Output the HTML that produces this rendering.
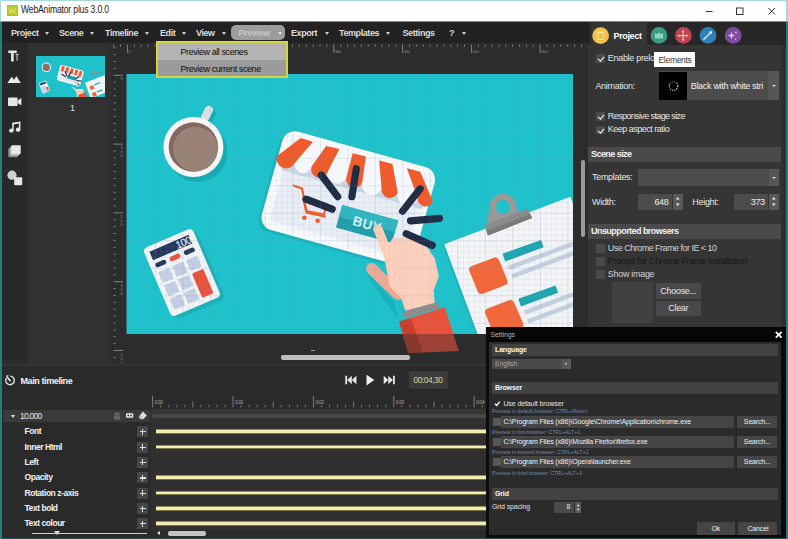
<!DOCTYPE html>
<html lang="en">
<head>
<meta charset="utf-8">
<title>WebAnimator plus 3.0.0</title>
<style>
*{box-sizing:border-box;margin:0;padding:0}
html,body{width:788px;height:539px;overflow:hidden;background:#2b2b2b}
body{position:relative;font-family:"Liberation Sans",sans-serif;font-size:9px;color:#e4e4e4;letter-spacing:-0.3px}
.abs{position:absolute}
#win{position:absolute;left:0;top:0;width:788px;height:539px;overflow:hidden;background:#2c2c2c}
/* title bar */
#title{left:0;top:0;width:788px;height:21.500px;background:#fff;color:#111;border-bottom:1px solid #3aa9a6;border-top:1px solid #a5d9d7;border-right:2px solid #a5d9d7;border-left:1px solid #a5d9d7}
#title .ico{left:5.500px;top:4px;width:11px;height:11px;background:#bccb2b;border:1px solid #b0bf25}
#title .txt{left:20px;top:3px;font-size:10px;color:#1a1a1a;letter-spacing:-0.2px;white-space:nowrap;transform-origin:0 0;transform:scaleX(0.86)}
/* menu */
#menu{left:0;top:21.500px;width:788px;height:21.500px;background:#222}
#menu span{position:absolute;top:6px;font-weight:bold;font-size:9px;color:#dcdcdc;white-space:nowrap;letter-spacing:-0.42px}
#menu i{position:absolute;top:10px;width:0;height:0;border-left:2.5px solid transparent;border-right:2.5px solid transparent;border-top:3px solid #cfcfcf}
#menu .hl{left:231px;top:3px;width:54px;height:15.5px;border-radius:5px;background:#9c9c9c}
/* left toolbar */
#tools{left:0;top:43px;width:28px;height:323px;background:#292929}
#scenes{left:28px;top:43px;width:83px;height:323px;background:#313131}
#edge-l{left:0;top:21.500px;width:1.600px;height:518px;background:#257f7d}
#edge-b{left:0;top:538px;width:788px;height:1px;background:#1d5a59}
#edge-r{left:786px;top:21.500px;width:2px;height:518px;background:#247a78}
/* stage */
#stagewrap{left:111px;top:43px;width:477px;height:323px;background:#2c2c2c}
#stage{left:127px;top:74px;width:446px;height:260px;background:#1fc1cb;box-shadow:-0.5px 0 0 #1fc1cb}
/* dropdown */
#dd{left:156px;top:41px;width:132px;height:37px;background:#9d9d9d;border:2px solid #d3d63c}
#dd div{position:absolute;left:0;width:128px;color:#0c0c0c;font-size:9px;padding:4px 0 0 22.500px;white-space:nowrap;letter-spacing:-0.42px}
/* right panel */
#right{left:588px;top:22px;width:199px;height:344px;background:#353535}
.chk{position:absolute;width:8.500px;height:8.500px;background:#4b4b4b}
.chk.on::after{content:"";position:absolute;left:3px;top:1px;width:2.5px;height:5px;border:solid #fff;border-width:0 1.6px 1.6px 0;transform:rotate(40deg)}
.lbl{position:absolute;white-space:nowrap;font-size:9px;color:#e6e6e6}
.sec{position:absolute;left:0;height:14px;background:#4a4a4a;font-weight:bold;font-size:9px;color:#f2f2f2;padding:2px 0 0 3px;letter-spacing:-0.55px}
.inp{position:absolute;background:#4c4c4c}
.btn{position:absolute;background:#494949;color:#e6e6e6;font-size:9px;text-align:center}
/* timeline */
#tl{left:0;top:366px;width:788px;height:173px;background:#2a2a2a}
.row{position:absolute;left:24.500px;font-size:8.500px;color:#f3f3f3;white-space:nowrap;font-weight:bold;letter-spacing:-0.45px}
.plus{position:absolute;left:137px;width:11px;height:11px;background:#474747}
.plus::before{content:"";position:absolute;left:2.500px;top:5px;width:6px;height:1.4px;background:#ddd}
.plus::after{content:"";position:absolute;left:4.800px;top:2.500px;width:1.4px;height:6px;background:#ddd}
.bar{position:absolute;left:156px;width:340px;height:4.500px;background:#f3edb0;border-top:1px solid #8f8b5a;border-bottom:1px solid #76724a}
/* settings */
#set{left:489px;top:327px;width:299px;height:212px;background:#0a0a0a}
#set .tb{left:0;top:0;width:299px;height:15px;background:#060606;color:#b4b4b4;font-size:7px;padding:4px 0 0 1.500px;letter-spacing:-0.1px}
#set .sec2{position:absolute;left:3px;width:285.500px;height:12px;background:#424242;font-weight:bold;font-size:7px;color:#f6f6f6;padding:2px 0 0 3px;letter-spacing:-0.15px}
#set .s{position:absolute;white-space:nowrap;font-size:7px;color:#e4e4e4;letter-spacing:-0.1px}
#set .h{position:absolute;white-space:nowrap;font-size:5.300px;color:#6d8ca6;letter-spacing:-0.05px}
#set .path{position:absolute;left:19px;width:231px;height:11px;background:#454545;color:#f0f0f0;font-size:7px;padding:2px 0 0 2.200px;white-space:nowrap;overflow:hidden;letter-spacing:-0.15px}
#set .sb{position:absolute;left:253px;width:42px;height:11px;background:#454545;color:#f0f0f0;font-size:7px;text-align:center;padding-top:2px;letter-spacing:-0.15px}
#set .c{position:absolute;left:5px;width:8px;height:8px;background:#575757}
</style>
</head>
<body>
<div id="win">
  <!-- TITLE BAR -->
  <div id="title" class="abs">
    <div class="ico abs"><svg width="11" height="11" viewBox="0 0 11 11" style="position:absolute;left:-1px;top:-1px"><path d="M2.500 3l1.300 5 1.700-4 1.700 4 1.300-5" stroke="#dfe86c" stroke-width="1" fill="none"/></svg></div>
    <div class="txt abs">WebAnimator plus 3.0.0</div>
    <svg class="abs" style="left:689px;top:-1px" width="98" height="21" viewBox="0 0 98 21">
      <path d="M16 11.500h6.500" stroke="#333" stroke-width="1" fill="none"/>
      <rect x="46.500" y="8" width="6.500" height="6.500" stroke="#333" stroke-width="1" fill="none"/>
      <path d="M78.500 8l6.500 6.500M85 8l-6.500 6.500" stroke="#333" stroke-width="1" fill="none"/>
    </svg>
  </div>

  <!-- MENU BAR -->
  <div id="menu" class="abs">
    <div class="hl abs"></div>
    <span style="left:11px">Project</span><i style="left:44.700px"></i>
    <span style="left:59px">Scene</span><i style="left:90.400px"></i>
    <span style="left:105px">Timeline</span><i style="left:144.700px"></i>
    <span style="left:160px">Edit</span><i style="left:181.800px"></i>
    <span style="left:196px">View</span><i style="left:222.400px"></i>
    <span style="left:238.500px;color:#c6c6c6">Preview</span><i style="left:277.500px;border-top-color:#e2e2e2"></i>
    <span style="left:291px">Export</span><i style="left:324.900px"></i>
    <span style="left:339px">Templates</span><i style="left:385.800px"></i>
    <span style="left:402.500px">Settings</span>
    <span style="left:449px">?</span><i style="left:461.500px"></i>
  </div>
  <!-- LEFT TOOLS -->
  <div id="tools" class="abs">
    <svg class="abs" style="left:0;top:0" width="28" height="323" viewBox="0 43 28 323" fill="#e8e8e8">
      <!-- text tool -->
      <path d="M8.300 50.400h8.400v2.600h-3v8.400h-2.600v-8.400h-2.800z"/>
      <path d="M15.500 53.800h3.200v1.200h-1v5.800h-1.200v-5.800h-1z" fill="#bdbdbd"/>
      <!-- image -->
      <path d="M7.400 83l4.300-6.200 2.400 3 2.200-3.800 4.500 7z"/>
      <!-- camera -->
      <rect x="8" y="97.500" width="9.600" height="8.500" rx="1"/>
      <path d="M17.600 100.600l3.800-2.600v7.600l-3.800-2.600z"/>
      <!-- music -->
      <path d="M12.200 122.800l8.200-1.400v8.300a2.300 2 0 1 1-1.500-1.900v-4.300l-5.200.9v6.200a2.300 2 0 1 1-1.500-1.900z"/>
      <!-- layers -->
      <rect x="8.300" y="148.200" width="9.400" height="9" rx="1" fill="#8e8e8e"/>
      <rect x="9.800" y="146.700" width="9.400" height="9" rx="1" fill="#b5b5b5"/>
      <rect x="11.300" y="145.300" width="9.400" height="9" rx="1"/>
      <!-- shapes -->
      <circle cx="12" cy="175.200" r="4.600" fill="#cfcfcf"/>
      <rect x="14.200" y="177.200" width="8" height="8" rx="1"/>
    </svg>
  </div>
  <div id="scenes" class="abs">
    <div class="abs" style="left:8px;top:13px;width:69px;height:41px;background:#1fc1cb;overflow:hidden">
      <svg width="69" height="41" viewBox="0 0 446 260" preserveAspectRatio="none">
        <circle cx="67" cy="72" r="30" fill="#f6f7f7"/><circle cx="67" cy="72" r="24" fill="#8a7065"/>
        <g transform="translate(17 174) rotate(-22.400)"><rect width="51" height="70" rx="4" fill="#f3f4f5"/><rect x="5" y="5" width="41" height="12" fill="#24375a"/><rect x="5" y="26" width="26" height="38" fill="#c3cfe2"/><rect x="34" y="40" width="12" height="25" fill="#e8503c"/></g>
        <g transform="translate(158.800 53.300) rotate(15.500)"><rect width="158" height="102" rx="13" fill="#f7f9fb"/><rect x="9" y="9" width="140" height="84" fill="#e3e9f2"/>
          <rect x="12" y="6" width="18" height="34" fill="#ef5b2b"/><rect x="42" y="6" width="18" height="34" fill="#ef5b2b"/><rect x="72" y="6" width="18" height="34" fill="#ef5b2b"/><rect x="102" y="6" width="18" height="34" fill="#ef5b2b"/><rect x="130" y="6" width="18" height="34" fill="#ef5b2b"/>
          <rect x="62" y="52" width="58" height="22" fill="#1c9faa"/>
          <path d="M40 35l18 22M75 28l-4 28M25 58l26 8M135 42l-16 22M128 70l28-3M124 82l26 12" stroke="#1f2d45" stroke-width="7" stroke-linecap="round"/></g>
        <polygon points="317,169 443,122 480,220 353,270" fill="#f3f4f5"/>
        <polygon points="345,193 369,184 378,207 354,216" fill="#f2673a"/><polygon points="361,236 384,227 394,250 370,260" fill="#f2673a"/>
        <polygon points="376,179 414,165 417,172 378,187" fill="#1fa7b0"/><polygon points="391,224 429,211 431,218 394,231" fill="#1fa7b0"/>
        <path d="M360 112l44-17 5 12-45 17z" fill="#8f8f8f"/><circle cx="377" cy="95" r="8" fill="none" stroke="#9b9b9b" stroke-width="4"/>
        <path d="M256 160l14 28M262 215l40 0 6 50-36 0zM240 200l30 28" stroke="#fbcdb9" stroke-width="10" stroke-linecap="round" fill="#fbcdb9"/>
        <polygon points="272,247 318,232 332,275 281,277" fill="#e8523a"/>
      </svg>
    </div>
    <div class="abs" style="left:42px;top:60px;font-size:9px;color:#ddd">1</div>
  </div>
  <!-- STAGE AREA -->
  <div id="stagewrap" class="abs"></div>
  <svg class="abs" style="left:0;top:0" width="788" height="370" viewBox="0 0 788 370">
    <path d="M113.6 44.5v2.200M120.5 44.5v2.200M127.4 44.5v8.5M134.3 44.5v2.200M141.2 44.5v2.200M148.0 44.5v2.200M154.9 44.5v2.200M161.8 44.5v2.200M168.7 44.5v2.200M175.6 44.5v2.200M182.4 44.5v2.200M189.3 44.5v2.200M196.2 44.5v8.5M203.1 44.5v2.200M210.0 44.5v2.200M216.8 44.5v2.200M223.7 44.5v2.200M230.6 44.5v2.200M237.5 44.5v2.200M244.4 44.5v2.200M251.2 44.5v2.200M258.1 44.5v2.200M265.0 44.5v8.5M271.9 44.5v2.200M278.8 44.5v2.200M285.6 44.5v2.200M292.5 44.5v2.200M299.4 44.5v2.200M306.3 44.5v2.200M313.2 44.5v2.200M320.0 44.5v2.200M326.9 44.5v2.200M333.8 44.5v8.5M340.7 44.5v2.200M347.6 44.5v2.200M354.4 44.5v2.200M361.3 44.5v2.200M368.2 44.5v2.200M375.1 44.5v2.200M382.0 44.5v2.200M388.8 44.5v2.200M395.7 44.5v2.200M402.6 44.5v8.5M409.5 44.5v2.200M416.4 44.5v2.200M423.2 44.5v2.200M430.1 44.5v2.200M437.0 44.5v2.200M443.9 44.5v2.200M450.8 44.5v2.200M457.6 44.5v2.200M464.5 44.5v2.200M471.4 44.5v8.5M478.3 44.5v2.200M485.2 44.5v2.200M492.0 44.5v2.200M498.9 44.5v2.200M505.8 44.5v2.200M512.7 44.5v2.200M519.6 44.5v2.200M526.4 44.5v2.200M533.3 44.5v2.200M540.2 44.5v8.5M547.1 44.5v2.200M554.0 44.5v2.200M560.8 44.5v2.200M567.7 44.5v2.200M574.6 44.5v2.200M581.5 44.5v2.200" stroke="#8c8c8c" stroke-width="0.9" fill="none"/>
    <text x="128.6" y="52.500" font-size="4" fill="#8c8c8c" font-family="Liberation Sans,sans-serif">0</text><text x="335.0" y="52.500" font-size="4" fill="#8c8c8c" font-family="Liberation Sans,sans-serif">300</text><text x="403.8" y="52.500" font-size="4" fill="#8c8c8c" font-family="Liberation Sans,sans-serif">400</text><text x="472.6" y="52.500" font-size="4" fill="#8c8c8c" font-family="Liberation Sans,sans-serif">500</text><text x="541.4" y="52.500" font-size="4" fill="#8c8c8c" font-family="Liberation Sans,sans-serif">600</text>
    <path d="M113.500 47.8h2.200M113.500 54.7h2.200M113.500 61.5h2.200M113.500 68.4h2.200M113.500 75.3h9.500M113.500 82.2h2.200M113.500 89.1h2.200M113.500 95.9h2.200M113.500 102.8h2.200M113.500 109.7h2.200M113.500 116.6h2.200M113.500 123.5h2.200M113.500 130.3h2.200M113.500 137.2h2.200M113.500 144.1h9.500M113.500 151.0h2.200M113.500 157.9h2.200M113.500 164.7h2.200M113.500 171.6h2.200M113.500 178.5h2.200M113.500 185.4h2.200M113.500 192.3h2.200M113.500 199.1h2.200M113.500 206.0h2.200M113.500 212.9h9.500M113.500 219.8h2.200M113.500 226.7h2.200M113.500 233.5h2.200M113.500 240.4h2.200M113.500 247.3h2.200M113.500 254.2h2.200M113.500 261.1h2.200M113.500 267.9h2.200M113.500 274.8h2.200M113.500 281.7h9.500M113.500 288.6h2.200M113.500 295.5h2.200M113.500 302.3h2.200M113.500 309.2h2.200M113.500 316.1h2.200M113.500 323.0h2.200M113.500 329.9h2.200M113.500 336.7h2.200M113.500 343.6h2.200M113.500 350.5h9.500M113.500 357.4h2.200M113.500 364.3h2.200" stroke="#8c8c8c" stroke-width="0.9" fill="none"/>
    <text x="120.500" y="80.3" font-size="4" fill="#8c8c8c" font-family="Liberation Sans,sans-serif">0</text><text x="120.500" y="149.1" font-size="4" fill="#8c8c8c" font-family="Liberation Sans,sans-serif">1</text><text x="120.500" y="153.1" font-size="4" fill="#8c8c8c" font-family="Liberation Sans,sans-serif">0</text><text x="120.500" y="157.1" font-size="4" fill="#8c8c8c" font-family="Liberation Sans,sans-serif">0</text><text x="120.500" y="217.9" font-size="4" fill="#8c8c8c" font-family="Liberation Sans,sans-serif">2</text><text x="120.500" y="221.9" font-size="4" fill="#8c8c8c" font-family="Liberation Sans,sans-serif">0</text><text x="120.500" y="225.9" font-size="4" fill="#8c8c8c" font-family="Liberation Sans,sans-serif">0</text><text x="120.500" y="286.7" font-size="4" fill="#8c8c8c" font-family="Liberation Sans,sans-serif">3</text><text x="120.500" y="290.7" font-size="4" fill="#8c8c8c" font-family="Liberation Sans,sans-serif">0</text><text x="120.500" y="294.7" font-size="4" fill="#8c8c8c" font-family="Liberation Sans,sans-serif">0</text><text x="120.500" y="355.5" font-size="4" fill="#8c8c8c" font-family="Liberation Sans,sans-serif">4</text><text x="120.500" y="359.5" font-size="4" fill="#8c8c8c" font-family="Liberation Sans,sans-serif">0</text><text x="120.500" y="363.5" font-size="4" fill="#8c8c8c" font-family="Liberation Sans,sans-serif">0</text>
  </svg>
  <div id="stage" class="abs">
    <svg class="abs" style="left:0;top:1px;overflow:visible" width="446" height="260" viewBox="0 0 446 260">
      <defs>
        <pattern id="finegrid" width="5.500" height="5.500" patternUnits="userSpaceOnUse" x="0.400" y="0.300">
          <path d="M0 0.250H5.500M0.250 0V5.500" stroke="#8aa0c0" stroke-opacity="0.28" stroke-width="0.5" fill="none"/>
        </pattern>
        <pattern id="handgrid" width="5.500" height="5.500" patternUnits="userSpaceOnUse" x="0.400" y="0.300">
          <path d="M0 0.250H5.500M0.250 0V5.500" stroke="#ffffff" stroke-opacity="0.35" stroke-width="0.5" fill="none"/>
        </pattern>
        <pattern id="majgrid" width="27.500" height="27.500" patternUnits="userSpaceOnUse" x="0.400" y="0.300">
          <path d="M0 0.400H27.500M0.400 0V27.500" stroke="#6f93a8" stroke-opacity="0.22" stroke-width="0.8" fill="none"/>
        </pattern>
        <clipPath id="stclip"><rect x="-0.5" y="-1" width="446.500" height="260"/></clipPath>
      </defs>
      <g opacity="0.6">
        <polygon points="272.200,247.500 317.600,233.200 331.900,276.000 281.200,278.100" fill="#e8523a"/>
        <polygon points="272.200,247.500 283.600,244.100 296.000,276.600 281.200,278.100" fill="#c63f2f"/>
      </g>
      <g clip-path="url(#stclip)">
<g>
<circle cx="70.4" cy="77.0" r="30" fill="#18aab4"/>
<line x1="81.0" y1="46.6" x2="84.9" y2="38.9" stroke="#18aab4" stroke-width="7.5" stroke-linecap="round"/>
<line x1="78.0" y1="42.6" x2="81.9" y2="34.9" stroke="#dcdfe1" stroke-width="8.3" stroke-linecap="round"/>
<circle cx="66.4" cy="72.0" r="30" fill="#f6f7f7"/>
<circle cx="66.4" cy="72.0" r="24.7" fill="#84685d"/>
<circle cx="68.4" cy="74.0" r="22.3" fill="#9b8276"/>
</g>
<g transform="translate(15.6 173.9) rotate(-23.2) scale(1.04)">
<rect x="3" y="4" width="51.500" height="71.500" rx="4" fill="#1bb0ba"/>
<rect x="0" y="0" width="51.500" height="71.500" rx="4" fill="#f3f4f5"/>
<rect x="5" y="5" width="41" height="9" fill="#24375a"/>
<text x="46" y="13.2" font-family="Liberation Sans,sans-serif" font-size="10" fill="#ffffff" text-anchor="end" letter-spacing="-0.5">100</text>
<rect x="5" y="17.5" width="11" height="4.6" rx="2.3" fill="#24375a"/>
<rect x="20" y="17.5" width="11" height="4.6" rx="2.3" fill="#e8503c"/>
<rect x="35" y="17.5" width="11" height="4.6" rx="2.3" fill="#24375a"/>
<rect x="5.0" y="26.5" width="11.4" height="11.4" fill="#c3cfe2"/>
<rect x="19.6" y="26.5" width="11.4" height="11.4" fill="#c3cfe2"/>
<rect x="34.2" y="26.5" width="11.4" height="11.4" fill="#c3cfe2"/>
<rect x="5.0" y="40.5" width="11.4" height="11.4" fill="#c3cfe2"/>
<rect x="19.6" y="40.5" width="11.4" height="11.4" fill="#c3cfe2"/>
<rect x="5.0" y="54.5" width="11.4" height="11.4" fill="#c3cfe2"/>
<rect x="19.6" y="54.5" width="11.4" height="11.4" fill="#c3cfe2"/>
<rect x="34.2" y="40.5" width="11.8" height="25.500" rx="1.5" fill="#e8503c"/>
</g>
<polygon points="16.9,174.4 64.2,154.2 92.7,220.6 45.4,240.9" fill="url(#finegrid)"/>
<g transform="translate(158.8 53.3) rotate(15.5)">
<rect x="-2.5" y="3" width="158" height="102" rx="13" fill="#1bb2bc"/>
<rect x="0" y="0" width="158" height="102" rx="13" fill="#f7f9fb"/>
<rect x="9" y="9" width="140" height="84" rx="3" fill="#e9eef5"/>
<rect x="7" y="28" width="146" height="13.5" fill="#cbd6e5"/>
<rect x="74.9" y="58.7" width="58" height="23.6" fill="#1c9faa"/>
<rect x="74.9" y="58.7" width="58" height="12" fill="#30b5c0"/>
<text x="104" y="75.4" text-anchor="middle" font-family="Liberation Sans,sans-serif" font-weight="bold" font-size="13.5" fill="#d9f5f7" letter-spacing="0.2">BUY</text>
</g>
<polygon points="160.9,57.0 307.4,97.6 281.7,190.1 135.2,149.5" fill="url(#finegrid)"/>
<path d="M185.9 66.7 L199.1 71.0 L184.7 91.3 A8.6 8.6 0 0 1 167.8 87.9 Z" fill="#f4f7fb"/>
<path d="M212.4 73.9 L225.7 78.3 L219.6 101.7 A9.9 9.9 0 0 1 200.3 97.6 Z" fill="#f4f7fb"/>
<path d="M238.9 81.6 L252.2 85.5 L254.6 113.7 A10.2 10.2 0 0 1 235.3 107.2 Z" fill="#f4f7fb"/>
<path d="M265.4 88.9 L279.9 93.2 L290.8 123.4 A10.5 10.5 0 0 1 270.7 117.3 Z" fill="#f4f7fb"/>
<path d="M173.8 63.1 L185.9 66.7 L167.8 87.9 A9.7 9.7 0 0 1 149.7 81.2 Z" fill="#ef5b2b"/>
<path d="M199.1 71.0 L212.4 73.9 L200.3 97.6 A8.4 8.4 0 0 1 184.7 91.3 Z" fill="#ef5b2b"/>
<path d="M225.7 78.3 L238.9 81.6 L235.3 107.2 A8.3 8.3 0 0 1 219.6 101.7 Z" fill="#ef5b2b"/>
<path d="M252.2 85.5 L265.4 88.9 L270.7 117.3 A8.3 8.3 0 0 1 254.6 113.7 Z" fill="#ef5b2b"/>
<path d="M279.9 93.2 L293.2 96.8 L305.9 126.5 A7.8 7.8 0 0 1 290.8 123.4 Z" fill="#ef5b2b"/>
<g fill="none" stroke="#ef5b2b" stroke-width="2.1" stroke-linejoin="round" stroke-linecap="round">
<polyline points="166.6,110.6 175.0,113.5 179.8,137.8 197.9,141.4"/>
<polygon points="176.2,123.4 200.3,129.4 196.7,139.5 179.1,136.1"/>
<polyline points="182.3,128.2 195.5,131.3"/>
</g>
<circle cx="177.4" cy="142.7" r="2.3" fill="#ef5b2b"/><circle cx="190.7" cy="145.8" r="2.3" fill="#ef5b2b"/>
<polygon points="315.6,170.1 443.4,122.8 493.9,259.1 366.1,306.4" fill="#1cb3bd" />
<polygon points="317.2,169.2 443.4,121.8 493.9,257.5 367.7,304.9" fill="#f3f4f5" />
<polygon points="317.2,169.2 443.4,121.8 493.9,257.5 367.7,304.9" fill="url(#finegrid)" />
<circle cx="375.9" cy="132.0" r="10.2" fill="none" stroke="#999999" stroke-width="6.2"/>
<polygon points="362.5,132.5 359.4,151.7 392.2,139.2 389.1,131.7 383.1,136.7 376.4,139.4 369.7,137.6" fill="#999999" />
<polygon points="357.2,150.1 400.6,133.4 405.1,143.1 361.0,160.4" fill="#8b8b8b" />
<polygon points="359.4,155.9 403.4,139.2 405.1,143.1 361.0,160.4" fill="#7a7a7a" />
<polygon points="346.2,194.7 368.3,186.5 376.5,206.4 354.4,214.9" fill="#f2673a" stroke="#f2673a" stroke-width="8" stroke-linejoin="round"/>
<polygon points="362.0,237.3 383.5,229.1 392.3,249.6 370.9,258.5" fill="#f2673a" stroke="#f2673a" stroke-width="8" stroke-linejoin="round"/>
<polygon points="375.6,178.6 414.1,165.1 416.6,172.3 378.1,186.5" fill="#1fa7b0" />
<polygon points="391.4,223.8 428.6,210.5 431.1,217.8 393.9,231.6" fill="#1fa7b0" />
<line x1="381.9" y1="192.8" x2="451.3" y2="167.0" stroke="#c3cede" stroke-width="4.5"/>
<line x1="385.1" y1="201.4" x2="451.3" y2="176.4" stroke="#c3cede" stroke-width="4.5"/>
<line x1="397.7" y1="237.6" x2="451.3" y2="217.4" stroke="#c3cede" stroke-width="4.5"/>
<line x1="400.8" y1="246.5" x2="451.3" y2="227.5" stroke="#c3cede" stroke-width="4.5"/>
<path d="M238.4 195.8 L267.0 227.0 L270.9 243.9 L246.2 210.1 Z" fill="#1bb0ba"/>
<line x1="244.9" y1="193.8" x2="270.9" y2="219.2" stroke="#e9ab98" stroke-width="11.5" stroke-linecap="round" />
<path d="M258.6 179.0 L267.0 164.7 L292.9 164.7 L305.9 184.2 L309.8 201.0 L304.6 215.3 L305.9 229.6 L279.9 234.0 L276.1 222.6 L264.4 210.1 Z" fill="#fbcdb9" stroke="#fbcdb9" stroke-width="4" stroke-linejoin="round"/>
<line x1="250.9" y1="154.0" x2="263.1" y2="184.2" stroke="#fbcdb9" stroke-width="9.2" stroke-linecap="round" />
<path d="M258.6 179.0 L267.0 164.7 L292.9 164.7 L305.9 184.2 L309.8 201.0 L304.6 215.3 L305.9 229.6 L279.9 234.0 L276.1 222.6 L264.4 210.1 Z" fill="url(#handgrid)"/>
<polygon points="275.5,236.6 310.6,227.0 312.7,233.0 277.4,243.4" fill="#8d8d8d" />
<polygon points="272.2,246.5 317.6,232.2 331.9,275.1 281.2,277.1" fill="#e8523a" />
<polygon points="272.2,246.5 283.6,243.1 296.1,275.6 281.2,277.1" fill="#c63f2f" />
<line x1="194.3" y1="100.0" x2="210.7" y2="121.7" stroke="#1f2d45" stroke-width="7.2" stroke-linecap="round" />
<line x1="229.3" y1="93.7" x2="224.9" y2="121.7" stroke="#1f2d45" stroke-width="7.2" stroke-linecap="round" />
<line x1="179.1" y1="124.1" x2="205.2" y2="134.2" stroke="#1f2d45" stroke-width="7.2" stroke-linecap="round" />
<line x1="293.2" y1="113.7" x2="275.6" y2="136.1" stroke="#1f2d45" stroke-width="7.2" stroke-linecap="round" />
<line x1="283.5" y1="145.8" x2="312.5" y2="143.4" stroke="#1f2d45" stroke-width="7.2" stroke-linecap="round" />
<line x1="279.2" y1="158.8" x2="305.2" y2="170.4" stroke="#1f2d45" stroke-width="7.2" stroke-linecap="round" />
        <rect x="-0.5" y="-1" width="446.500" height="260" fill="url(#majgrid)"/>
      </g>
    </svg>
  </div>
  <div class="abs" style="left:1px;top:362.500px;width:587px;height:4px;background:#323232"></div>
  <!-- stage scrollbars -->
  <div class="abs" style="left:281px;top:355px;width:128.500px;height:4.500px;border-radius:2px;background:#bdbdbd"></div>
  <div class="abs" style="left:311px;top:350px;width:4px;height:1px;background:#999"></div>
  <div class="abs" style="left:580.500px;top:160px;width:4px;height:77px;border-radius:2px;background:#9a9a9a"></div>

  <!-- DROPDOWN -->
  <div id="dd" class="abs">
    <div style="top:0;height:16.500px;background:#b4b4b4">Preview all scenes</div>
    <div style="top:16.500px;height:16.500px;background:#9b9b9b">Preview current scene</div>
  </div>
  <!-- RIGHT PANEL -->
  <div id="right" class="abs">
    <!-- tab bar -->
    <div class="abs" style="left:0;top:0;width:199px;height:23px;background:#272727"></div>
    <div class="abs" style="left:2.500px;top:0;width:56px;height:23px;background:#353535"></div>
    <svg class="abs" style="left:0;top:0" width="199" height="24" viewBox="588 22 199 24">
      <circle cx="600.600" cy="35.600" r="8.400" fill="#f0c24b"/>
      <path d="M597.500 32.500h6.200l-.6 7h-5zM597 32h7.200" stroke="#fbe9b0" stroke-width="1" fill="none"/>
      <circle cx="659" cy="35.400" r="8.400" fill="#3b9a82"/>
      <path transform="translate(-1 0)" d="M656 32.800l2 1.400 2-1.800 2 1.800 2-1.400v5.800h-8z" fill="#8fd6bd"/>
      <circle cx="683.400" cy="35.400" r="8.400" fill="#bd4450"/>
      <path d="M683 31v9.200M678.400 35.600h9.200" stroke="#f3b3b8" stroke-width="1.300" stroke-linecap="round"/>
      <path d="M683 30.300l1.600 1.800h-3.200zM683 40.900l1.600-1.800h-3.200zM677.700 35.600l1.800-1.600v3.200zM688.300 35.600l-1.800-1.600v3.200z" fill="#f3b3b8"/>
      <circle cx="708" cy="35.400" r="8.400" fill="#2f80b8"/>
      <path d="M703.800 39.400l6.200-6.200" stroke="#bfe0f5" stroke-width="1.600" stroke-linecap="round"/>
      <circle cx="710.800" cy="32.400" r="1.300" fill="#e8f5fd"/>
      <circle cx="733.200" cy="35.400" r="8.400" fill="#7b4b9d"/>
      <path d="M731.500 32l1 2.600 2.600 1-2.600 1-1 2.600-1-2.600-2.600-1 2.600-1z" fill="#d9c3ea"/>
      <circle cx="736" cy="32.500" r="0.900" fill="#d9c3ea"/><circle cx="735.500" cy="39" r="0.800" fill="#d9c3ea"/>
    </svg>
    <div class="lbl" style="left:25.500px;top:8.500px;font-weight:bold;color:#fff;font-size:9px;letter-spacing:-0.35px">Project</div>

    <!-- preloader -->
    <div class="chk on" style="left:8px;top:32px"></div>
    <div class="lbl" style="left:19.800px;top:30.500px">Enable preloader</div>
    <div class="abs" style="left:65.800px;top:29.700px;width:41.500px;height:15px;background:#fdfdfd"></div>
    <div class="lbl" style="left:70.500px;top:32.500px;color:#3a3a3a;font-size:8.500px">Elements</div>

    <div class="lbl" style="left:7.400px;top:59px">Animation:</div>
    <div class="inp" style="left:71px;top:48.500px;width:119.500px;height:29.500px"></div>
    <div class="abs" style="left:71px;top:49.500px;width:28px;height:28px;background:#000"></div>
    <svg class="abs" style="left:71px;top:49.500px" width="28" height="28" viewBox="0 0 28 28">
      <circle cx="14.500" cy="14" r="4.300" fill="none" stroke="#d8d8d8" stroke-width="1.300" stroke-dasharray="1.300 1" opacity="0.85"/>
      <path d="M11 11.500a4.300 4.300 0 0 1 6-1" stroke="#000" stroke-width="1.600" fill="none" opacity="0.6"/>
    </svg>
    <div class="lbl" style="left:102.700px;top:59px;color:#f0f0f0">Black with white stri</div>
    <div class="abs" style="left:180px;top:48.500px;width:10.500px;height:29.500px;background:#565656"></div>
    <div class="abs" style="left:183.500px;top:62.500px;width:0;height:0;border-left:2px solid transparent;border-right:2px solid transparent;border-top:2.500px solid #ddd"></div>

    <div class="chk on" style="left:8px;top:90px"></div>
    <div class="lbl" style="left:19.800px;top:88.500px;letter-spacing:-0.62px">Responsive stage size</div>
    <div class="chk on" style="left:8px;top:103.500px"></div>
    <div class="lbl" style="left:19.800px;top:102px;letter-spacing:-0.5px">Keep aspect ratio</div>

    <!-- scene size -->
    <div class="sec" style="top:125px;width:192.500px;height:15px">Scene size</div>
    <div class="lbl" style="left:4px;top:150px">Templates:</div>
    <div class="inp" style="left:49.500px;top:147px;width:141.500px;height:16.500px"></div>
    <div class="abs" style="left:181px;top:147px;width:10px;height:16.500px;background:#565656"></div>
    <div class="abs" style="left:184px;top:154.500px;width:0;height:0;border-left:2px solid transparent;border-right:2px solid transparent;border-top:2.500px solid #ddd"></div>
    <div class="lbl" style="left:4px;top:175px">Width:</div>
    <div class="inp" style="left:49.500px;top:172px;width:34.500px;height:15.500px"></div>
    <div class="lbl" style="left:49.500px;top:175px;width:31px;text-align:right;color:#f0f0f0">648</div>
    <div class="abs" style="left:84.700px;top:172px;width:10px;height:15.500px;background:#585858"></div>
    <div class="lbl" style="left:104.300px;top:175px">Height:</div>
    <div class="inp" style="left:145.800px;top:172px;width:34.500px;height:15.500px"></div>
    <div class="lbl" style="left:145.800px;top:175px;width:31px;text-align:right;color:#f0f0f0">373</div>
    <div class="abs" style="left:180.800px;top:172px;width:10px;height:15.500px;background:#585858"></div>
    <svg class="abs" style="left:84px;top:171.200px" width="110" height="17" viewBox="0 0 110 17" fill="#e8e8e8">
      <path d="M3.700 6.500l2-2.500 2 2.500zM3.700 10.500l2 2.500 2-2.500zM99.800 6.500l2-2.500 2 2.500zM99.800 10.500l2 2.500 2-2.500z"/>
    </svg>

    <!-- unsupported browsers -->
    <div class="sec" style="top:202px;width:192.500px;height:15px">Unsupported browsers</div>
    <div class="chk" style="left:8.200px;top:222px"></div>
    <div class="lbl" style="left:19.800px;top:221px;letter-spacing:-0.52px;color:#d2d2d2">Use Chrome Frame for IE &lt; 10</div>
    <div class="chk" style="left:8.200px;top:235.200px"></div>
    <div class="lbl" style="left:19.800px;top:234px;color:#161616">Prompt for Chrome Frame installation</div>
    <div class="chk" style="left:8.200px;top:248.200px"></div>
    <div class="lbl" style="left:19.800px;top:247px;color:#d2d2d2">Show image</div>
    <div class="abs" style="left:24px;top:259.500px;width:40.500px;height:41px;background:#414141"></div>
    <div class="btn" style="left:68px;top:260.800px;width:44.500px;height:16px;padding-top:3px">Choose...</div>
    <div class="btn" style="left:68px;top:278.800px;width:44.500px;height:15px;padding-top:2.500px">Clear</div>
    <!-- scroll track -->
    <div class="abs" style="left:192.500px;top:23px;width:6.500px;height:321px;background:#2e2e2e"></div>
  </div>
  <!-- TIMELINE -->
  <div id="tl" class="abs">
    <svg class="abs" style="left:3px;top:7px" width="16" height="14" viewBox="3 373 16 14">
      <path d="M10.750 376.170A4.300 4.300 0 1 1 6.100 378.600" fill="none" stroke="#e2e2e2" stroke-width="1.400" stroke-linecap="round"/>
      <path d="M10.200 380.600l-2.700-3.100" stroke="#e2e2e2" stroke-width="1.600" stroke-linecap="round" fill="none"/>
      <path d="M6.200 375.200l2.800.3-2.400 2.300z" fill="#e2e2e2"/>
    </svg>
    <div class="lbl" style="left:20.500px;top:9.500px;font-weight:bold;color:#f4f4f4;letter-spacing:-0.4px">Main timeline</div>
    <svg class="abs" style="left:340px;top:5px" width="115" height="20" viewBox="340 371 115 20">
      <path d="M345.300 375.800h1.800v8.500h-1.800zM351.800 375.800v8.500l-4.600-4.250zM356.400 375.800v8.500l-4.600-4.250z" fill="#e8e8e8"/>
      <path d="M366.500 374.800l7.800 5.300-7.800 5.300z" fill="#f0f0f0"/>
      <path d="M394.800 375.800h-1.800v8.500h1.800zM388.300 375.800v8.500l4.600-4.250zM383.700 375.800v8.500l4.600-4.250z" fill="#e8e8e8"/>
      <rect x="408.800" y="371.400" width="39" height="17.300" fill="#3c3c3c"/>
      <text x="428" y="383" text-anchor="middle" font-family="Liberation Sans,sans-serif" font-size="8.300" fill="#ddd48c" letter-spacing="-0.4">00:04,30</text>
    </svg>
    <svg class="abs" style="left:0;top:25px" width="489" height="20" viewBox="0 391 489 20">
      <path d="M152.6 395.600v11.800M160.6 405.200v2.200M168.7 405.200v2.200M176.7 405.200v2.200M184.8 405.200v2.200M192.8 401.500v5.900M200.8 405.200v2.200M208.9 405.200v2.200M216.9 405.200v2.200M225.0 405.200v2.200M233.0 395.600v11.800M241.0 405.200v2.200M249.1 405.200v2.200M257.1 405.200v2.200M265.2 405.200v2.200M273.2 401.500v5.900M281.2 405.200v2.200M289.3 405.200v2.200M297.3 405.200v2.200M305.4 405.200v2.200M313.4 395.600v11.800M321.4 405.200v2.200M329.5 405.200v2.200M337.5 405.200v2.200M345.6 405.200v2.200M353.6 401.500v5.900M361.6 405.200v2.200M369.7 405.200v2.200M377.7 405.200v2.200M385.8 405.200v2.200M393.8 395.600v11.800M401.8 405.200v2.200M409.9 405.200v2.200M417.9 405.200v2.200M426.0 405.200v2.200M434.0 401.500v5.900M442.0 405.200v2.200M450.1 405.200v2.200M458.1 405.200v2.200M466.2 405.200v2.200M474.2 395.600v11.800M482.2 405.200v2.200" stroke="#858585" stroke-width="0.9" fill="none"/>
      <text x="154.6" y="404.300" font-size="4.800" fill="#a9a9a9" font-family="Liberation Sans,sans-serif">0:00</text><text x="235.0" y="404.300" font-size="4.800" fill="#a9a9a9" font-family="Liberation Sans,sans-serif">0:01</text><text x="315.4" y="404.300" font-size="4.800" fill="#a9a9a9" font-family="Liberation Sans,sans-serif">0:02</text><text x="395.8" y="404.300" font-size="4.800" fill="#a9a9a9" font-family="Liberation Sans,sans-serif">0:03</text><text x="476.2" y="404.300" font-size="4.800" fill="#a9a9a9" font-family="Liberation Sans,sans-serif">0:04</text>
    </svg>
    <div class="abs" style="left:151px;top:52px;width:338px;height:112px;background:#303030"></div>
    <div class="abs" style="left:151px;top:42.800px;width:338px;height:9.400px;background:#373737"></div>
    <div class="abs" style="left:2.500px;top:43.600px;width:147px;height:12.200px;background:#3a3a3a"></div>
    <div class="abs" style="left:10.500px;top:48.500px;width:0;height:0;border-left:2.500px solid transparent;border-right:2.500px solid transparent;border-top:3px solid #e6e6e6"></div>
    <div class="lbl" style="left:20px;top:45px;color:#e8e8e8;font-size:8.500px;letter-spacing:-0.75px">10.000</div>
    <svg class="abs" style="left:112px;top:44px" width="38" height="12" viewBox="112 410 38 12">
      <path d="M114.500 412.500h5v2.500h-5zM114 415.500h6.200v4h-6.200z" fill="#666"/>
      <rect x="126" y="413.300" width="7.200" height="4.400" rx="1.200" fill="#ececec"/>
      <circle cx="128.200" cy="415.500" r="0.900" fill="#333"/><circle cx="131" cy="415.500" r="0.900" fill="#333"/>
      <path d="M142.800 411.600l4 4-3.600 3.600h-2.400l-2.200-2.200z" fill="#dcdcdc"/>
      <path d="M139.600 416l2.800 2.800" stroke="#888" stroke-width="0.800"/>
    </svg>
    <div class="abs" style="left:152.500px;top:48.300px;width:336px;height:3.400px;background:#484848"></div>
    <div class="row" style="top:60.3px">Font</div>
    <div class="plus" style="top:60.1px"></div>
    <div class="bar" style="top:63.1px"></div>
    <div class="row" style="top:75.7px">Inner Html</div>
    <div class="plus" style="top:75.5px"></div>
    <div class="bar" style="top:78.5px"></div>
    <div class="row" style="top:91.0px">Left</div>
    <div class="plus" style="top:90.8px"></div>
    <div class="row" style="top:106.4px">Opacity</div>
    <div class="plus" style="top:106.2px"></div>
    <div class="bar" style="top:109.2px"></div>
    <div class="row" style="top:121.9px">Rotation z-axis</div>
    <div class="plus" style="top:121.7px"></div>
    <div class="bar" style="top:124.7px"></div>
    <div class="row" style="top:137.3px">Text bold</div>
    <div class="plus" style="top:137.1px"></div>
    <div class="bar" style="top:140.1px"></div>
    <div class="row" style="top:152.3px">Text colour</div>
    <div class="plus" style="top:152.1px"></div>
    <div class="bar" style="top:155.1px"></div>
    <div class="abs" style="left:32px;top:166.500px;width:115px;height:1.500px;background:#cfcfcf"></div>
    <div class="abs" style="left:53.500px;top:165px;width:0;height:0;border-left:3px solid transparent;border-right:3px solid transparent;border-top:4.500px solid #dedede"></div>
    <div class="abs" style="left:157px;top:165px;width:0;height:0;border-top:2.500px solid transparent;border-bottom:2.500px solid transparent;border-right:3.500px solid #dedede"></div>
    <div class="abs" style="left:167.500px;top:165px;width:38px;height:4.500px;border-radius:2px;background:#c4c4c4"></div>
  </div>
  <!-- SETTINGS DIALOG -->
  <div class="abs" style="left:486px;top:327px;width:3px;height:212px;background:#0c0c0c"></div>
  <div id="set" class="abs">
    <div class="abs" style="left:0;top:15px;width:291.500px;height:192.500px;background:#2b2b2b"></div>
    <div class="tb abs">Settings</div>
    <svg class="abs" style="left:285px;top:3px" width="10" height="10" viewBox="0 0 10 10"><path d="M1.800 1.800l5.800 5.800M7.600 1.800l-5.800 5.800" stroke="#fff" stroke-width="1.700"/></svg>
    <div class="sec2" style="top:17.0px">Language</div>
    <div class="abs" style="left:3px;top:31.9px;width:78.500px;height:10.600px;background:#4a4a4a"></div>
    <div class="s" style="left:6px;top:33.4px;color:#a6a6a6">English</div>
    <div class="abs" style="left:73px;top:31.9px;width:8.500px;height:10.600px;background:#5a5a5a"></div>
    <div class="abs" style="left:75.500px;top:36.3px;width:0;height:0;border-left:1.800px solid transparent;border-right:1.800px solid transparent;border-top:2.200px solid #e0e0e0"></div>
    <div class="sec2" style="top:55.2px">Browser</div>
    <svg class="abs" style="left:4px;top:72.3px" width="9" height="9" viewBox="0 0 9 9"><path d="M2 4.800l1.700 1.700 3-3.800" stroke="#fff" stroke-width="1.300" fill="none"/></svg>
    <div class="s" style="left:14.400px;top:72.6px">Use default browser</div>
    <div class="h" style="left:3px;top:81.2px">Preview in default browser: CTRL+Return</div>
    <div class="c" style="left:3.700px;top:91.2px"></div>
    <div class="path" style="left:12.200px;top:89.2px;width:232.800px;height:11.700px">C:\Program Files (x86)\Google\Chrome\Application\chrome.exe</div>
    <div class="sb" style="left:248px;top:89.2px;width:40.400px;height:11.700px">Search...</div>
    <div class="h" style="left:3px;top:102.3px">Preview in first browser: CTRL+ALT+1</div>
    <div class="c" style="left:3.700px;top:111.2px"></div>
    <div class="path" style="left:12.200px;top:109.2px;width:232.800px;height:11.700px">C:\Program Files (x86)\Mozilla Firefox\firefox.exe</div>
    <div class="sb" style="left:248px;top:109.2px;width:40.400px;height:11.700px">Search...</div>
    <div class="h" style="left:3px;top:121.9px">Preview in second browser: CTRL+ALT+2</div>
    <div class="c" style="left:3.700px;top:130.9px"></div>
    <div class="path" style="left:12.200px;top:128.9px;width:232.800px;height:11.700px">C:\Program Files (x86)\Opera\launcher.exe</div>
    <div class="sb" style="left:248px;top:128.9px;width:40.400px;height:11.700px">Search...</div>
    <div class="h" style="left:3px;top:142.7px">Preview in third browser: CTRL+ALT+3</div>
    <div class="sec2" style="top:160.6px">Grid</div>
    <div class="s" style="left:3px;top:175.8px">Grid spacing</div>
    <div class="abs" style="left:65.300px;top:175.0px;width:20px;height:10.600px;background:#4a4a4a"></div>
    <div class="s" style="left:65.300px;top:176.3px;width:16px;text-align:right">8</div>
    <div class="abs" style="left:85.800px;top:175.0px;width:6.500px;height:10.600px;background:#5a5a5a"></div>
    <svg class="abs" style="left:85.800px;top:175.0px" width="7" height="11" viewBox="0 0 7 11" fill="#e8e8e8"><path d="M1.700 4.300l1.500-2 1.500 2zM1.700 6.700l1.500 2 1.500-2z"/></svg>
    <div class="sb" style="left:207.700px;top:195.4px;width:38.200px;height:12.700px;padding-top:2.500px">Ok</div>
    <div class="sb" style="left:249.300px;top:195.4px;width:39.100px;height:12.700px;padding-top:2.500px">Cancel</div>
  </div>
  <div id="edge-b" class="abs"></div>
  <div id="edge-l" class="abs"></div>
  <div id="edge-r" class="abs"></div>
</div>
</body>
</html>
